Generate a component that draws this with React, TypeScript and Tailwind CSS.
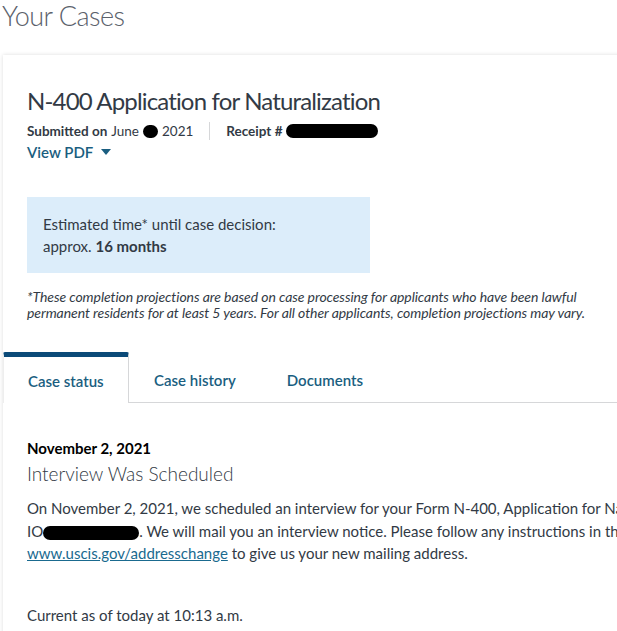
import React from "react";

const font = { fontFamily: "Lato, 'Open Sans', sans-serif" };

function Blob({ w, h = 12, className = "" }: { w: number; h?: number; className?: string }) {
  return (
    <span
      className={"inline-block bg-black rounded-full align-middle " + className}
      style={{ width: w, height: h }}
    />
  );
}

export default function App() {
  return (
    <div className="w-[617px] h-[631px] overflow-hidden bg-white text-[#323a45]" style={font}>
      <h1 className="pl-[2px] pt-[0px] text-[27px] leading-[32px] font-light text-[#5b616b] tracking-[-0.02em]">
        Your Cases
      </h1>
      <div className="ml-[3px] mt-[23px] w-[700px] bg-white shadow-[0_0_4px_rgba(0,0,0,0.14)]">
        <div className="px-6 pt-[31px]">
          <h2 className="text-[24px] leading-[30px] font-normal tracking-[-0.035em] text-[#323a45]">
            N-400 Application for Naturalization
          </h2>
          <div className="mt-[6px] flex items-center text-[13.5px] leading-[18px]">
            <span className="font-bold">Submitted on</span>
            <span className="ml-1">June</span>
            <Blob w={15} h={13} className="mx-1" />
            <span>2021</span>
            <span className="mx-4 h-[18px] w-px bg-[#d6d7d9]" />
            <span className="font-bold">Receipt #</span>
            <Blob w={92} h={14} className="ml-1" />
          </div>
          <div className="mt-[2px] flex items-center text-[15px] leading-[20px] font-semibold text-[#1a5e80]">
            <span>View PDF</span>
            <svg width="10" height="6" viewBox="0 0 10 6" className="ml-2">
              <path d="M0 0h10L5 6z" fill="#1a5e80" />
            </svg>
          </div>
          <div className="mt-[35px] w-[343px] bg-[#dcedfa] px-4 py-4 text-[15px] leading-[22px]">
            <div>Estimated time* until case decision:</div>
            <div>
              approx. <span className="font-bold">16 months</span>
            </div>
          </div>
          <p className="mt-4 text-[14px] leading-[16px] italic tracking-[-0.005em]">
            *These completion projections are based on case processing for applicants who have been lawful
            <br />
            permanent residents for at least 5 years. For all other applicants, completion projections may vary.
          </p>
        </div>
        <div className="mt-[31px] flex text-[15px] font-semibold text-[#1a5e80]">
          <div className="w-[126px] h-[51px] border-t-[5px] border-t-[#0b4a78] border-l border-r border-[#d6d7d9] border-l-[#eeeeee] rounded-t-[2px] flex items-center pl-6 pt-[2px]">
            Case status
          </div>
          <div className="flex-1 flex items-center h-[51px] border-b border-[#d6d7d9] pt-[6px]">
            <span className="pl-[25px] pr-6">Case history</span>
            <span className="pl-[27px]">Documents</span>
          </div>
        </div>
        <div className="px-6 pt-[35px] pb-6">
          <div className="text-[15px] leading-[20px] font-bold text-black">November 2, 2021</div>
          <div className="mt-[3px] text-[19px] leading-[26px] font-light">Interview Was Scheduled</div>
          <div className="mt-[10px] text-[15px] leading-[22.5px] whitespace-nowrap">
            <div>
              On November 2, 2021, we scheduled an interview for your Form N-400, Application for Naturalization, Receipt Number
            </div>
            <div>
              IO<Blob w={96} h={14} />. We will mail you an interview notice. Please follow any instructions in the notice. If you move, go to
            </div>
            <div>
              <span className="underline text-[#1a6a8f]">www.uscis.gov/addresschange</span> to give us your new mailing address.
            </div>
          </div>
          <div className="mt-[39px] text-[15px] leading-[22px]">Current as of today at 10:13 a.m.</div>
        </div>
      </div>
    </div>
  );
}
